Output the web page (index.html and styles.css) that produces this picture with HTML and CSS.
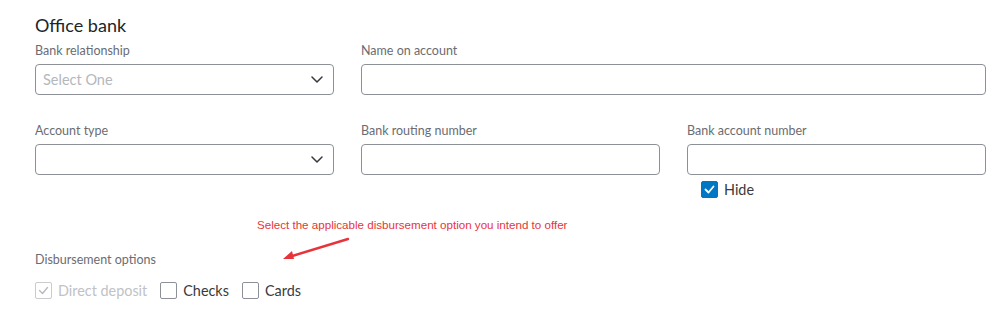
FILE: index.html
```html
<!DOCTYPE html>
<html lang="en">
<head>
    <meta charset="UTF-8">
    <meta name="viewport" content="width=device-width, initial-scale=1.0">
    <title>Office bank</title>
    <link rel="stylesheet" href="styles.css">
</head>
<body>
    <div class="page">
        <h2 class="section-title">Office bank</h2>

        <div class="field-grid">
            <div class="field">
                <label class="field-label">Bank relationship</label>
                <div class="select-box">
                    <span class="placeholder">Select One</span>
                    <svg class="chevron" width="12" height="7" viewBox="0 0 12 7"><path d="M1 1l5 5 5-5" fill="none" stroke="#393a3d" stroke-width="1.5" stroke-linecap="round" stroke-linejoin="round"/></svg>
                </div>
            </div>
            <div class="field field-wide">
                <label class="field-label">Name on account</label>
                <div class="text-box"></div>
            </div>

            <div class="field">
                <label class="field-label">Account type</label>
                <div class="select-box">
                    <span class="placeholder"></span>
                    <svg class="chevron" width="12" height="7" viewBox="0 0 12 7"><path d="M1 1l5 5 5-5" fill="none" stroke="#393a3d" stroke-width="1.5" stroke-linecap="round" stroke-linejoin="round"/></svg>
                </div>
            </div>
            <div class="field">
                <label class="field-label">Bank routing number</label>
                <div class="text-box"></div>
            </div>
            <div class="field">
                <label class="field-label">Bank account number</label>
                <div class="text-box"></div>
                <div class="hide-row">
                    <span class="checkbox checked">
                        <svg width="11" height="9" viewBox="0 0 11 9"><path d="M1.5 4.5l3 3 5-6" fill="none" stroke="#fff" stroke-width="1.8" stroke-linecap="round" stroke-linejoin="round"/></svg>
                    </span>
                    <span class="check-text">Hide</span>
                </div>
            </div>
        </div>

        <div class="disbursement">
            <div class="field-label">Disbursement options</div>
            <div class="options">
                <div class="option disabled">
                    <span class="checkbox">
                        <svg width="11" height="9" viewBox="0 0 11 9"><path d="M1.5 4.5l3 3 5-6" fill="none" stroke="#b8babd" stroke-width="1.4" stroke-linecap="round" stroke-linejoin="round"/></svg>
                    </span>
                    <span class="check-text">Direct deposit</span>
                </div>
                <div class="option">
                    <span class="checkbox"></span>
                    <span class="check-text">Checks</span>
                </div>
                <div class="option">
                    <span class="checkbox"></span>
                    <span class="check-text">Cards</span>
                </div>
            </div>
        </div>

        <div class="annotation">
            <span class="note-text">Select the applicable disbursement option you intend to offer</span>
            <svg class="note-arrow" width="72" height="28" viewBox="0 0 72 28">
                <path d="M67 4L8 22" stroke="#e8333b" stroke-width="2.4" stroke-linecap="round"/>
                <path d="M2 24l9-8 2 8z" fill="#e8333b"/>
            </svg>
        </div>
    </div>
</body>
</html>
```

FILE: styles.css
```css
body {
    margin: 0;
    background-color: #fff;
    font-family: Lato, "Open Sans", sans-serif;
    color: #393a3d;
}
.page {
    position: relative;
    width: 999px;
    height: 316px;
    padding: 14px 0 0 35px;
    box-sizing: border-box;
}
.section-title {
    margin: 0 0 7px;
    font-size: 18px;
    line-height: 22px;
    font-weight: 400;
    color: #232427;
}
.field-grid {
    display: grid;
    grid-template-columns: 299px 299px 299px;
    column-gap: 27px;
    row-gap: 28px;
}
.field-wide {
    grid-column: span 2;
}
.field-label {
    display: block;
    font-size: 12.5px;
    line-height: 16px;
    color: #6b6c72;
    margin-bottom: 5px;
}
.select-box,
.text-box {
    height: 31px;
    box-sizing: border-box;
    border: 1px solid #8d9096;
    border-radius: 4px;
    background-color: #fff;
}
.select-box {
    display: flex;
    align-items: center;
    justify-content: space-between;
    padding: 0 10px 0 7px;
}
.placeholder {
    font-size: 14.5px;
    color: #b4b7bc;
}
.hide-row {
    display: flex;
    align-items: center;
    gap: 6px;
    margin: 6px 0 0 14px;
}
.checkbox {
    display: inline-flex;
    align-items: center;
    justify-content: center;
    width: 17px;
    height: 17px;
    box-sizing: border-box;
    border: 1px solid #8d9096;
    border-radius: 2px;
    background-color: #fff;
}
.checkbox.checked {
    background-color: #0077c5;
    border-color: #0077c5;
}
.check-text {
    font-size: 14.4px;
    color: #393a3d;
}
.disbursement {
    margin-top: 54px;
}
.disbursement .field-label {
    margin-bottom: 14px;
}
.options {
    display: flex;
    gap: 13px;
}
.option {
    display: flex;
    align-items: center;
    gap: 6px;
}
.option.disabled .checkbox {
    border-color: #c9cbce;
}
.option.disabled .check-text {
    color: #c0c2c6;
}
.annotation {
    position: absolute;
    left: 257px;
    top: 218px;
}
.note-text {
    display: block;
    font-family: "Liberation Sans", Arial, sans-serif;
    font-size: 11.6px;
    color: #e8333b;
}
.note-arrow {
    position: absolute;
    left: 24px;
    top: 17px;
}
```
